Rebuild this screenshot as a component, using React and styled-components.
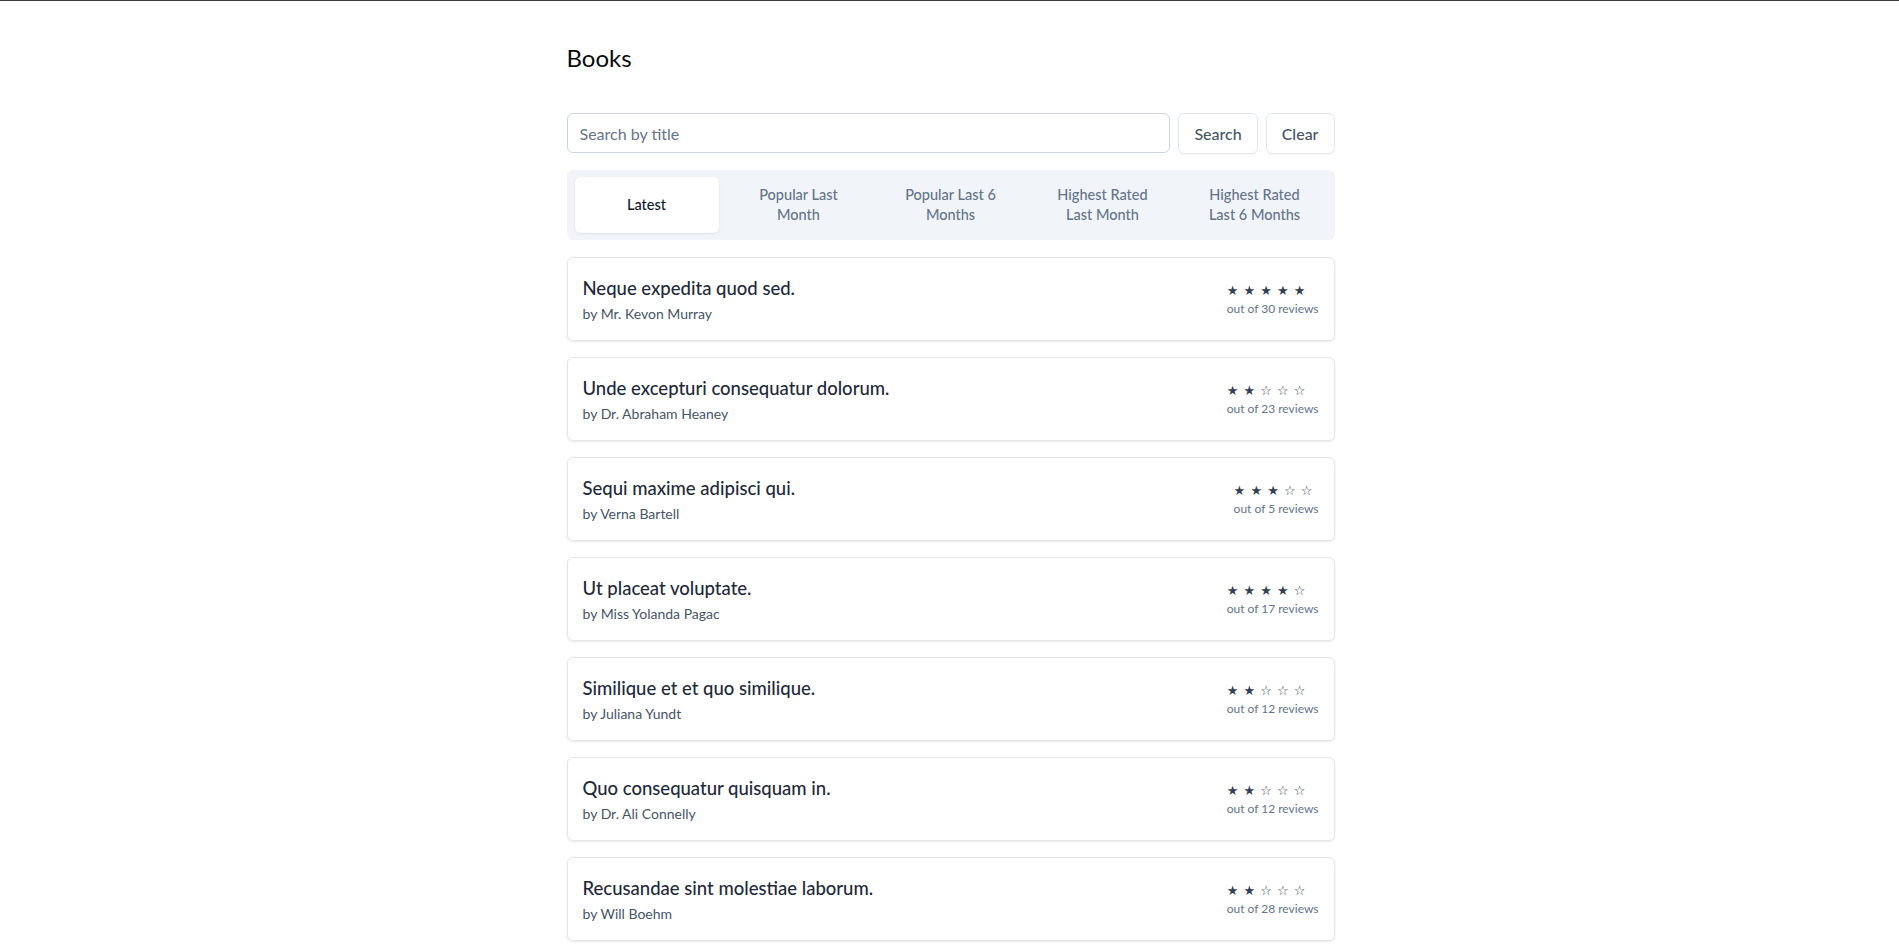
import React, { useState } from "react";
import styled, { createGlobalStyle } from "styled-components";

const GlobalStyle = createGlobalStyle`
    html, body {
        margin: 0;
        padding: 0;
        background: #fff;
    }
    body {
        border-top: 1px solid #3a3a3a;
        font-family: Lato, "Noto Sans", "DejaVu Sans", sans-serif;
        color: #0f172a;
    }
    * {
        box-sizing: border-box;
    }
`;

const Page = styled.main`
    max-width: 768px;
    margin: 0 auto;
    padding: 41px 0 40px;
    position: relative;
    left: 1px;
`;

const Title = styled.h1`
    margin: 0 0 39px;
    font-size: 24px;
    line-height: 32px;
    font-weight: 400;
    color: #0a0a0a;
`;

const SearchRow = styled.form`
    display: flex;
    gap: 8px;
    margin-bottom: 16px;
`;

const SearchInput = styled.input`
    flex: 1;
    height: 40px;
    padding: 0 12px;
    border: 1px solid #cbd5e1;
    border-radius: 6px;
    font-family: inherit;
    font-size: 16px;
    color: #0f172a;
    outline: none;
    &::placeholder {
        color: #64748b;
    }
`;

const Button = styled.button`
    height: 41px;
    padding: 0 15px;
    border: 1px solid #e2e8f0;
    border-radius: 6px;
    background: #fff;
    color: #475569;
    font-family: inherit;
    font-size: 16px;
    font-weight: 500;
    box-shadow: 0 1px 2px rgba(15, 23, 42, 0.04);
    cursor: pointer;
`;

const Tabs = styled.div`
    display: grid;
    grid-template-columns: repeat(5, 1fr);
    gap: 8px;
    padding: 7px 8px;
    background: #f1f5f9;
    border-radius: 6px;
    margin-bottom: 17px;
`;

const Tab = styled.button`
    height: 56px;
    border: none;
    border-radius: 6px;
    background: ${(p) => (p.$active ? "#fff" : "transparent")};
    box-shadow: ${(p) => (p.$active ? "0 1px 3px rgba(15, 23, 42, 0.08)" : "none")};
    color: ${(p) => (p.$active ? "#0f172a" : "#64748b")};
    font-family: inherit;
    font-size: 14.5px;
    font-weight: 500;
    line-height: 20px;
    padding: 0 16px;
    cursor: pointer;
`;

const List = styled.div`
    display: flex;
    flex-direction: column;
    gap: 16px;
`;

const Card = styled.article`
    display: flex;
    align-items: center;
    justify-content: space-between;
    padding: 16px 15px;
    border: 1px solid #e5e7eb;
    border-radius: 6px;
    background: #fff;
    box-shadow: 0 1px 3px rgba(0, 0, 0, 0.08), 0 1px 2px -1px rgba(0, 0, 0, 0.06);
`;

const BookTitle = styled.h2`
    margin: 0;
    font-size: 18.5px;
    line-height: 28px;
    font-weight: 500;
    color: #1e293b;
`;

const Author = styled.p`
    margin: 2px 0 0;
    font-size: 14px;
    line-height: 20px;
    color: #475569;
`;

const Rating = styled.div`
    text-align: left;
`;

const Stars = styled.div`
    font-family: "DejaVu Sans", sans-serif;
    font-size: 13px;
    line-height: 20px;
    letter-spacing: 0.5px;
    color: #334155;
`;

const Reviews = styled.div`
    font-size: 12px;
    line-height: 16px;
    color: #64748b;
`;

const tabs = [
    "Latest",
    "Popular Last Month",
    "Popular Last 6 Months",
    "Highest Rated Last Month",
    "Highest Rated Last 6 Months"
];

const books = [
    { title: "Neque expedita quod sed.", author: "Mr. Kevon Murray", rating: 5, reviews: 30 },
    { title: "Unde excepturi consequatur dolorum.", author: "Dr. Abraham Heaney", rating: 2, reviews: 23 },
    { title: "Sequi maxime adipisci qui.", author: "Verna Bartell", rating: 3, reviews: 5 },
    { title: "Ut placeat voluptate.", author: "Miss Yolanda Pagac", rating: 4, reviews: 17 },
    { title: "Similique et et quo similique.", author: "Juliana Yundt", rating: 2, reviews: 12 },
    { title: "Quo consequatur quisquam in.", author: "Dr. Ali Connelly", rating: 2, reviews: 12 },
    { title: "Recusandae sint molestiae laborum.", author: "Will Boehm", rating: 2, reviews: 28 }
];

const starString = (n) =>
    Array.from({ length: 5 }, (_, i) => (i < n ? "★" : "☆")).join(" ");

export default function App() {
    const [active, setActive] = useState(0);
    const [query, setQuery] = useState("");

    return (
        <>
            <GlobalStyle />
            <Page>
                <Title>Books</Title>
                <SearchRow onSubmit={(e) => e.preventDefault()}>
                    <SearchInput
                        placeholder="Search by title"
                        value={query}
                        onChange={(e) => setQuery(e.target.value)}
                    />
                    <Button type="submit">Search</Button>
                    <Button type="button" onClick={() => setQuery("")}>
                        Clear
                    </Button>
                </SearchRow>
                <Tabs>
                    {tabs.map((t, i) => (
                        <Tab key={t} $active={i === active} onClick={() => setActive(i)}>
                            {t}
                        </Tab>
                    ))}
                </Tabs>
                <List>
                    {books.map((b) => (
                        <Card key={b.title}>
                            <div>
                                <BookTitle>{b.title}</BookTitle>
                                <Author>by {b.author}</Author>
                            </div>
                            <Rating>
                                <Stars>{starString(b.rating)}</Stars>
                                <Reviews>out of {b.reviews} reviews</Reviews>
                            </Rating>
                        </Card>
                    ))}
                </List>
            </Page>
        </>
    );
}
